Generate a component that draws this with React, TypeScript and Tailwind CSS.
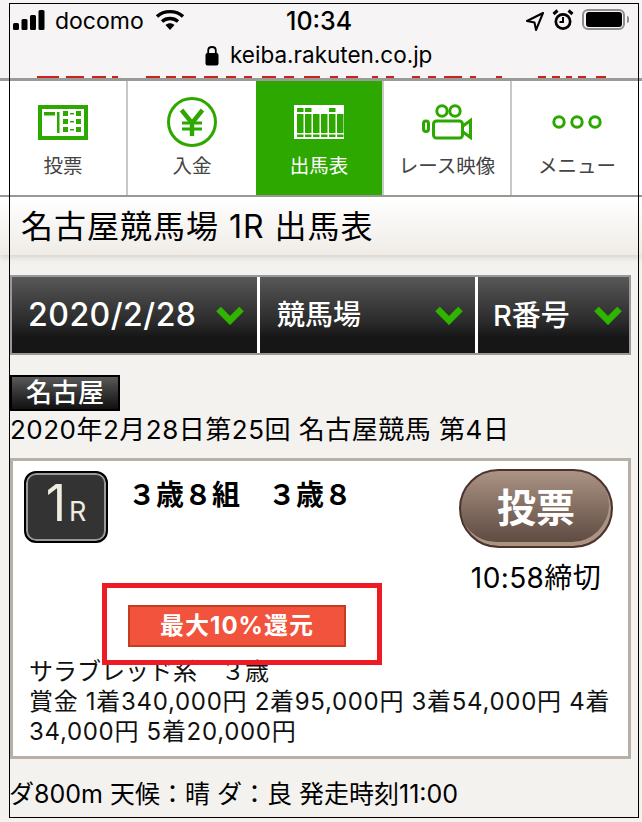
const jp = "font-['Inter','Noto_Sans_CJK_JP',sans-serif]";

function Signal() {
  return (
    <svg width="32" height="20" viewBox="0 0 32 20" className="absolute left-[13px] top-[10px]">
      <rect x="0" y="13" width="6" height="7" rx="1.5" fill="#000" />
      <rect x="8.5" y="9" width="6" height="11" rx="1.5" fill="#000" />
      <rect x="17" y="5" width="6" height="15" rx="1.5" fill="#000" />
      <rect x="25.5" y="0" width="6" height="20" rx="1.5" fill="#000" />
    </svg>
  );
}

function Wifi() {
  return (
    <svg width="30" height="22" viewBox="0 0 30 22" className="absolute left-[155px] top-[9px]">
      <path d="M2 7.5 C9 1 21 1 28 7.5" fill="none" stroke="#000" strokeWidth="3.4" />
      <path d="M7 12.5 C11.5 8.5 18.5 8.5 23 12.5" fill="none" stroke="#000" strokeWidth="3.4" />
      <path d="M10.5 16 C13.5 13.5 16.5 13.5 19.5 16 L15 21 Z" fill="#000" />
    </svg>
  );
}

function RightStatus() {
  return (
    <>
      <svg width="20" height="20" viewBox="0 0 20 20" className="absolute left-[525px] top-[11px]">
        <path d="M18 2 L2 10 L9.5 11.5 L11 19 Z" fill="none" stroke="#000" strokeWidth="2" strokeLinejoin="round" />
      </svg>
      <svg width="22" height="22" viewBox="0 0 22 22" className="absolute left-[552px] top-[9px]">
        <circle cx="11" cy="12.5" r="8.5" fill="#000" />
        <circle cx="11" cy="12.5" r="5.8" fill="#f6f4f4" />
        <path d="M11 8 V13 H7.5" fill="none" stroke="#000" strokeWidth="2" />
        <path d="M1.5 5 L5.5 1.5 M20.5 5 L16.5 1.5" stroke="#000" strokeWidth="3" />
      </svg>
      <div className="absolute left-[582px] top-[9px] flex h-[21px] w-[43px] items-center justify-center rounded-[6px] border-2 border-[#8e8e8e]">
        <div className="h-[15px] w-[36px] rounded-[3px] bg-black" />
      </div>
      <div className="absolute left-[627px] top-[16px] h-[7px] w-[2px] rounded-r bg-[#8e8e8e]" />
    </>
  );
}

function Lock() {
  return (
    <svg width="14" height="21" viewBox="0 0 14 21" className="shrink-0">
      <path d="M3.2 9 V5.5 C3.2 0.8 10.8 0.8 10.8 5.5 V9" fill="none" stroke="#000" strokeWidth="1.8" />
      <rect x="0.5" y="8" width="13" height="12.5" rx="2" fill="#000" />
    </svg>
  );
}

function RedSliver() {
  const parts: [number, number][] = [
    [37, 22], [66, 18], [92, 14], [112, 6], [146, 14], [166, 10], [182, 14], [204, 14],
    [226, 10], [244, 8], [262, 14], [284, 10], [304, 16], [330, 8], [346, 12], [372, 6],
    [386, 8], [412, 8], [428, 8], [444, 18], [470, 6], [496, 6], [538, 8], [552, 8], [566, 6], [578, 8], [596, 10],
  ];
  return (
    <svg width="642" height="2" viewBox="0 0 642 2" className="absolute bottom-0 left-0">
      {parts.map(([x, w]) => (
        <rect key={x} x={x} y="0" width={w} height="2" fill="#c9241c" />
      ))}
    </svg>
  );
}

function TicketIcon() {
  return (
    <svg width="50" height="35" viewBox="0 0 50 35">
      <rect x="2" y="2" width="46" height="31" fill="#fff" stroke="#2da800" strokeWidth="4" />
      <rect x="6" y="7" width="11" height="3.5" fill="#2da800" />
      <rect x="19" y="7" width="2.5" height="21" fill="#2da800" />
      {[6, 14, 22].map((y) => (
        <g key={y} fill="#2da800">
          <rect x="25" y={y} width="5" height="5" />
          <rect x="32" y={y + 2} width="4" height="1.5" />
          <rect x="38" y={y} width="5" height="5" />
        </g>
      ))}
    </svg>
  );
}

function YenIcon() {
  return (
    <svg width="50" height="50" viewBox="0 0 50 50">
      <circle cx="25" cy="25" r="23.5" fill="none" stroke="#2da800" strokeWidth="3" />
      <path d="M14.5 13 L25 26 L35.5 13 M25 26 V39" fill="none" stroke="#2da800" strokeWidth="4.4" />
      <path d="M15 26 H35 M15 32 H35" fill="none" stroke="#2da800" strokeWidth="3" />
    </svg>
  );
}

function TableIcon() {
  const xs = [3, 11, 19, 27, 35, 43];
  return (
    <svg width="50" height="34" viewBox="0 0 50 34">
      <rect width="50" height="34" fill="#fff" />
      {xs.map((x, i) => (
        <g key={x} fill="#2da800">
          {i === 0 || i === 1 || i === 4 ? <rect x={x} y="3" width="6.5" height="4" /> : null}
          <rect x={x} y="9" width="6.5" height="19" />
          <rect x={x} y="29.5" width="6.5" height="2.5" />
        </g>
      ))}
    </svg>
  );
}

function CameraIcon() {
  return (
    <svg width="50" height="36" viewBox="0 0 50 36">
      <g fill="none" stroke="#2da800" strokeWidth="3">
        <circle cx="20" cy="7" r="5.2" />
        <circle cx="33" cy="7" r="5.2" />
        <rect x="11.5" y="17" width="29" height="17" rx="3" />
        <path d="M41 22 L48.5 16.5 V33.5 L41 28" />
        <rect x="1.5" y="17" width="5" height="10.5" rx="2.5" />
      </g>
    </svg>
  );
}

function DotsIcon() {
  return (
    <svg width="50" height="14" viewBox="0 0 50 14">
      <g fill="none" stroke="#2da800" strokeWidth="3">
        <circle cx="7" cy="7" r="5.2" />
        <circle cx="25" cy="7" r="5.2" />
        <circle cx="43" cy="7" r="5.2" />
      </g>
    </svg>
  );
}

function Check() {
  return (
    <svg width="30" height="20" viewBox="0 0 30 20" className="shrink-0">
      <path d="M3.5 4 L15 15.5 L26.5 4" fill="none" stroke="#2fb400" strokeWidth="6.5" />
    </svg>
  );
}

function NavCell({
  label,
  active,
  width,
  border,
  children,
}: {
  label: string;
  active?: boolean;
  width: string;
  border?: boolean;
  children: React.ReactNode;
}) {
  return (
    <div
      className={`flex h-full shrink-0 flex-col items-center ${width} ${border ? "border-r-2 border-[#c8c8c8]" : ""} ${active ? "bg-[#2da800] text-white" : "bg-white text-[#444]"}`}
    >
      <div className="flex h-[72px] w-full items-center justify-center pt-[10px]">{children}</div>
      <div className="mt-[2px] text-[19.5px] leading-[22px] whitespace-nowrap">{label}</div>
    </div>
  );
}

function SelectCell({
  label,
  width,
  last,
  pad,
  size,
}: {
  label: string;
  width: string;
  last?: boolean;
  pad: string;
  size: string;
}) {
  return (
    <div
      className={`flex h-full items-center justify-between ${width} ${pad} ${last ? "" : "border-r-[3px] border-white"} bg-gradient-to-b from-[#585858] via-[#2a2a2a] via-60% to-[#161616] to-80%`}
    >
      <span className={`leading-none font-medium whitespace-nowrap text-white ${size}`}>{label}</span>
      <Check />
    </div>
  );
}

export default function App() {
  return (
    <div className={`relative h-[822px] w-[642px] overflow-hidden bg-[#f4f2ef] ${jp}`}>
      <div className="relative h-[78px] bg-[#f6f4f4]">
        <Signal />
        <span className="absolute left-[55px] top-[6px] text-[23px] leading-[30px] text-black">docomo</span>
        <Wifi />
        <span className="absolute left-[286px] top-[6px] text-[25px] leading-[30px] font-medium text-black">10:34</span>
        <RightStatus />
        <div className="absolute left-[205px] top-[42px] flex items-center gap-[11px]">
          <Lock />
          <span className="text-[22.5px] leading-[26px] text-black">keiba.rakuten.co.jp</span>
        </div>
        <RedSliver />
      </div>

      <div className="flex h-[119px] border-t-[3px] border-b-2 border-[#9a9a9a] bg-white">
        <NavCell label="投票" width="w-[128px]" border>
          <TicketIcon />
        </NavCell>
        <NavCell label="入金" width="w-[128px]">
          <YenIcon />
        </NavCell>
        <NavCell label="出馬表" active width="w-[126px]">
          <TableIcon />
        </NavCell>
        <div className="h-full w-[2px] bg-[#c8c8c8]" />
        <NavCell label="レース映像" width="w-[128px]" border>
          <CameraIcon />
        </NavCell>
        <NavCell label="メニュー" width="w-[130px]">
          <DotsIcon />
        </NavCell>
      </div>

      <div className="flex h-[58px] items-center bg-gradient-to-b from-white to-[#efece7] pt-[1px] pl-[21px] shadow-[0_2px_6px_rgba(120,100,80,0.25)]">
        <h1 className="text-[32px] leading-none font-normal tracking-[1px] whitespace-nowrap text-black">
          名古屋競馬場 1R 出馬表
        </h1>
      </div>

      <div className="mt-[20px] ml-[10px] flex h-[80px] w-[621px] border-2 border-[#999]">
        <SelectCell label="2020/2/28" size="text-[32px] tracking-[0.5px]" width="w-[248px]" pad="pl-[16px] pr-[12px]" />
        <SelectCell label="競馬場" size="text-[28px]" width="w-[218px]" pad="pl-[17px] pr-[11px]" />
        <SelectCell label="R番号" size="text-[29px]" width="w-[151px]" pad="pl-[15px] pr-[6px]" last />
      </div>

      <div className="mt-[20px] ml-[10px] flex h-[36px] w-[110px] items-center justify-center border-2 border-black bg-gradient-to-b from-[#5a5a5a] to-[#111] text-[26px] leading-none font-medium text-white">
        名古屋
      </div>
      <p className="ml-[10px] text-[26px] leading-[37px] tracking-[0.5px] whitespace-nowrap text-black">
        2020年2月28日第25回 名古屋競馬 第4日
      </p>

      <div className="mt-[10px] ml-[10px] h-[301px] w-[621px] border-[3px] border-[#b8b0a4] bg-white">
        <div className="flex h-[157px] items-start justify-between pt-[10px]">
          <div className="flex items-start">
            <div className="ml-[11px] flex h-[72px] w-[84px] items-baseline justify-center rounded-[12px] border-2 border-black bg-[#333] pt-[5px] leading-none text-[#f0ece0] shadow-[inset_0_0_0_2px_#999]">
              <span className="text-[50px]">1</span>
              <span className="ml-[3px] text-[27px]">R</span>
            </div>
            <div className="ml-[20px] pt-[7px] text-[28px] leading-[34px] font-bold whitespace-nowrap text-black">
              ３歳８組　３歳８
            </div>
          </div>
          <div className="mr-[15px] -mt-[2px] flex w-[154px] flex-col items-center">
            <div className="flex h-[79px] w-[154px] items-center justify-center rounded-full border-2 border-[#4a342c] bg-gradient-to-b from-[#ab9484] to-[#5c4840] pb-[3px] text-[39px] leading-none font-bold text-white shadow-[inset_-2px_-4px_0_#ab9484]">
              投票
            </div>
            <div className="mt-[13px] text-[28px] leading-[34px] tracking-[0.4px] whitespace-nowrap text-black">
              10:58締切
            </div>
          </div>
        </div>
        <div className="ml-[115px] -mt-[13px] flex h-[42px] w-[218px] items-center justify-center border-2 border-[#c43d1f] bg-[#f2533c] text-[24px] leading-none font-bold tracking-[1px] text-white">
          最大10%還元
        </div>
        <div className="mt-[10px] pr-[8px] pl-[16px] text-[24px] leading-[30px] text-[#111]">
          <div className="whitespace-nowrap">サラブレッド系　３歳</div>
          <div className="tracking-[0.7px]">賞金 1着340,000円 2着95,000円 3着54,000円 4着 34,000円 5着20,000円</div>
        </div>
      </div>

      <p className="mt-[18px] ml-[9px] text-[25px] leading-[34px] whitespace-nowrap text-black">
        ダ800m 天候：晴 ダ：良 発走時刻11:00
      </p>

      <div className="pointer-events-none absolute left-[102px] top-[583px] h-[82px] w-[280px] border-[5px] border-[#ed1c24]" />
      <div className="pointer-events-none absolute left-[9px] top-[3px] h-[815px] w-[630px] border border-black" />
    </div>
  );
}
